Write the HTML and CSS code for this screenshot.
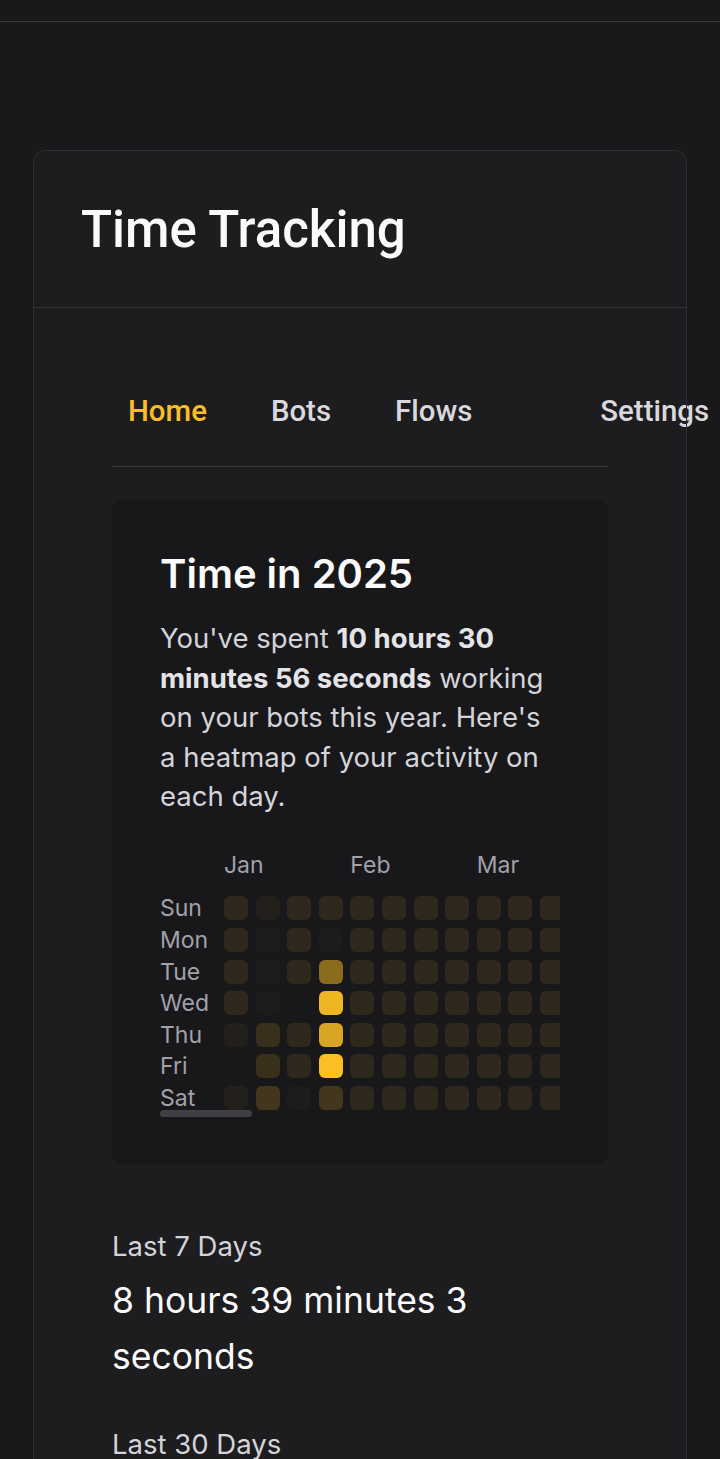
FILE: index.html
```html
<!DOCTYPE html>
<html lang="en">
<head>
<meta charset="utf-8">
<title>Time Tracking</title>
<link rel="stylesheet" href="styles.css">
</head>
<body>
<header class="topbar"></header>
<main class="page">
  <section class="card">
    <div class="card-head">
      <h1 class="title">Time Tracking</h1>
    </div>
    <div class="card-body">
      <nav class="tabs">
        <a class="tab active">Home</a>
        <a class="tab">Bots</a>
        <a class="tab">Flows</a>
        <a class="tab"></a>
        <a class="tab">Settings</a>
      </nav>

      <div class="year-card">
        <h2 class="year-title">Time in 2025</h2>
        <p class="year-text">You've spent <strong>10 hours 30 minutes 56 seconds</strong> working on your bots this year. Here's a heatmap of your activity on each day.</p>
        <div class="heat-scroll">
          <div class="heat">
            <span class="m"></span>
            <span class="day">Sun</span><span class="day">Mon</span><span class="day">Tue</span><span class="day">Wed</span><span class="day">Thu</span><span class="day">Fri</span><span class="day">Sat</span>

            <span class="m">Jan</span>
            <i class="c l3"></i><i class="c l3"></i><i class="c l3"></i><i class="c l3"></i><i class="c l2"></i><i class="c l0"></i><i class="c l2"></i>
            <span class="m"></span>
            <i class="c l2"></i><i class="c l1"></i><i class="c l1"></i><i class="c l1"></i><i class="c l4"></i><i class="c l4"></i><i class="c l5"></i>
            <span class="m"></span>
            <i class="c l3"></i><i class="c l3"></i><i class="c l3"></i><i class="c l0"></i><i class="c l3"></i><i class="c l3"></i><i class="c l1"></i>
            <span class="m"></span>
            <i class="c l3"></i><i class="c l1"></i><i class="c l6"></i><i class="c l8"></i><i class="c l7"></i><i class="c l9"></i><i class="c l5"></i>
            <span class="m">Feb</span>
            <i class="c l3"></i><i class="c l3"></i><i class="c l3"></i><i class="c l3"></i><i class="c l3"></i><i class="c l3"></i><i class="c l3"></i>
            <span class="m"></span>
            <i class="c l3"></i><i class="c l3"></i><i class="c l3"></i><i class="c l3"></i><i class="c l3"></i><i class="c l3"></i><i class="c l3"></i>
            <span class="m"></span>
            <i class="c l3"></i><i class="c l3"></i><i class="c l3"></i><i class="c l3"></i><i class="c l3"></i><i class="c l3"></i><i class="c l3"></i>
            <span class="m"></span>
            <i class="c l3"></i><i class="c l3"></i><i class="c l3"></i><i class="c l3"></i><i class="c l3"></i><i class="c l3"></i><i class="c l3"></i>
            <span class="m">Mar</span>
            <i class="c l3"></i><i class="c l3"></i><i class="c l3"></i><i class="c l3"></i><i class="c l3"></i><i class="c l3"></i><i class="c l3"></i>
            <span class="m"></span>
            <i class="c l3"></i><i class="c l3"></i><i class="c l3"></i><i class="c l3"></i><i class="c l3"></i><i class="c l3"></i><i class="c l3"></i>
            <span class="m"></span>
            <i class="c l3"></i><i class="c l3"></i><i class="c l3"></i><i class="c l3"></i><i class="c l3"></i><i class="c l3"></i><i class="c l3"></i>
            <span class="m"></span>
            <i class="c l3"></i><i class="c l3"></i><i class="c l3"></i><i class="c l3"></i><i class="c l3"></i><i class="c l3"></i><i class="c l3"></i>
            <span class="m"></span>
            <i class="c l3"></i><i class="c l3"></i><i class="c l3"></i><i class="c l3"></i><i class="c l3"></i><i class="c l3"></i><i class="c l3"></i>
            <span class="m">Apr</span>
            <i class="c l3"></i><i class="c l3"></i><i class="c l3"></i><i class="c l3"></i><i class="c l3"></i><i class="c l3"></i><i class="c l3"></i>
          </div>
        </div>
        <div class="scroll-thumb"></div>
      </div>

      <div class="stats">
        <div class="stat">
          <div class="stat-label">Last 7 Days</div>
          <div class="stat-value">8 hours 39 minutes 3 seconds</div>
        </div>
        <div class="stat">
          <div class="stat-label">Last 30 Days</div>
          <div class="stat-value">10 hours 30 minutes 56 seconds</div>
        </div>
      </div>
    </div>
  </section>
</main>
</body>
</html>
```

FILE: styles.css
```css
* { box-sizing: border-box; }

html, body {
  margin: 0;
  padding: 0;
  background: #19191b;
  font-family: "Inter", "Noto Sans", sans-serif;
  color: #d4d4d8;
}

.topbar {
  height: 22px;
  border-bottom: 1px solid #3a3a3d;
  background: #19191b;
}

.page {
  padding: 128px 33px 0;
}

.card {
  position: relative;
  background: #1d1d1f;
  border-radius: 12px;
}

.card::after {
  content: "";
  position: absolute;
  inset: 0;
  border: 1px solid #2f2f33;
  border-radius: 12px;
  pointer-events: none;
}

.card-head {
  padding: 50px 48px 47px;
  border-bottom: 1px solid #333336;
}

.title {
  margin: 0;
  font-family: "Roboto", sans-serif;
  font-weight: 500;
  font-size: 51px;
  line-height: 60px;
  color: #fafafa;
}

.card-body {
  padding: 68px 79px 80px;
}

.tabs {
  display: flex;
  gap: 32px;
  padding-bottom: 22px;
  border-bottom: 1px solid #38383b;
}

.tab {
  flex: none;
  padding: 17px 16px 15px;
  font-family: "Roboto", sans-serif;
  font-weight: 500;
  font-size: 29.4px;
  line-height: 36px;
  color: #d9d9dd;
  white-space: nowrap;
}

.tab.active {
  color: #fbbf24;
}

.year-card {
  margin-top: 33px;
  background: #18181b;
  border-radius: 12px;
  padding: 50px 48px 47px;
}

.year-title {
  margin: 0;
  font-size: 40px;
  line-height: 48px;
  font-weight: 600;
  color: #fafafa;
}

.year-text {
  margin: 21px 0 0;
  font-size: 27.5px;
  line-height: 39.5px;
  color: #d4d4d8;
}

.year-text strong {
  font-weight: 700;
  color: #e4e4e7;
}

.heat-scroll {
  margin-top: 34px;
  overflow-x: auto;
  overflow-y: hidden;
  scrollbar-width: none;
}

.heat-scroll::-webkit-scrollbar {
  display: none;
}

.scroll-thumb {
  width: 92px;
  height: 7px;
  margin: 0;
  border-radius: 4px;
  background: #3f3f46;
}

.heat {
  display: grid;
  grid-template-columns: 56.4px repeat(53, 24px);
  grid-template-rows: 38.4px repeat(7, 24px);
  grid-auto-flow: column;
  gap: 7.6px;
  width: max-content;
}

.m {
  align-self: start;
  font-size: 23px;
  line-height: 28px;
  color: #a1a1aa;
  white-space: nowrap;
}

.day {
  font-size: 23px;
  line-height: 24px;
  color: #a1a1aa;
  white-space: nowrap;
}

.c {
  display: block;
  width: 24px;
  height: 24px;
  border-radius: 6px;
}

.l0 { background: transparent; }
.l1 { background: rgba(251, 191, 36, 0.022); }
.l2 { background: rgba(251, 191, 36, 0.05); }
.l3 { background: rgba(251, 191, 36, 0.1); }
.l4 { background: rgba(251, 191, 36, 0.15); }
.l5 { background: rgba(251, 191, 36, 0.19); }
.l6 { background: rgba(251, 191, 36, 0.51); }
.l7 { background: rgba(251, 191, 36, 0.85); }
.l8 { background: rgba(251, 191, 36, 0.95); }
.l9 { background: #fbbf24; }

.stats {
  margin-top: 63px;
  display: flex;
  flex-direction: column;
  gap: 40px;
}

.stat-label {
  font-size: 27.5px;
  line-height: 38px;
  color: #d4d4d8;
}

.stat-value {
  margin-top: 8px;
  font-size: 35.5px;
  line-height: 56px;
  color: #fafafa;
}
```
